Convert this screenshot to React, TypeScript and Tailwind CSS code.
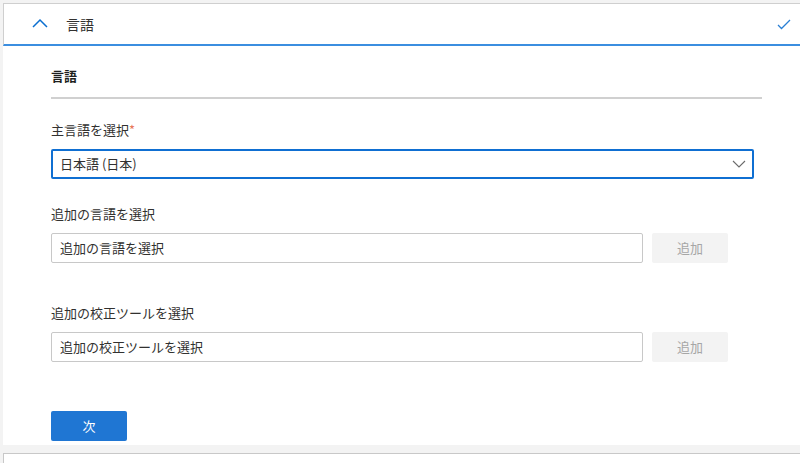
import React from 'react';

const font = { fontFamily: '"Noto Sans CJK JP", "Noto Sans", sans-serif' };

const ChevronUp = () => (
  <svg width="16" height="10" viewBox="0 0 16 10" fill="none">
    <path d="M1 9L8 2L15 9" stroke="#0b6fd0" strokeWidth="1.5" />
  </svg>
);

const Check = () => (
  <svg width="14" height="11" viewBox="0 0 14 11" fill="none">
    <path d="M1 6L4.5 9.5L13 1" stroke="#2a7fd4" strokeWidth="1.3" />
  </svg>
);

const ChevronDown = () => (
  <svg width="14" height="8" viewBox="0 0 14 8" fill="none">
    <path d="M1 1L7 7L13 1" stroke="#6b6b6b" strokeWidth="1.1" />
  </svg>
);

interface AddRowProps {
  label: string;
  placeholder: string;
}

const AddRow: React.FC<AddRowProps> = ({ label, placeholder }) => (
  <>
    <div className="text-[13px] leading-[20px] text-[#323130]">{label}</div>
    <div className="mt-[9px] flex gap-[9px]">
      <div className="flex h-[30px] w-[592px] items-center rounded-[2px] border border-[#c8c8c8] px-[8px] text-[13px] text-[#323130]">
        {placeholder}
      </div>
      <button className="h-[30px] w-[76px] rounded-[2px] bg-[#f3f3f3] text-[13px] text-[#a6a6a6]">
        追加
      </button>
    </div>
  </>
);

export default function App() {
  return (
    <div className="h-[463px] w-[800px] overflow-hidden bg-[#f3f3f3] pl-[3px] pt-[3px]" style={font}>
      {/* header */}
      <div className="flex h-[43px] w-[800px] items-center border-l border-t border-b-2 border-l-[#cfcfcf] border-t-[#cfcfcf] border-b-[#3b8ee0] bg-white">
        <div className="ml-[28px] flex w-[16px] items-center pb-[2px]">
          <ChevronUp />
        </div>
        <span className="ml-[18px] text-[14px] text-[#323130]">言語</span>
        <div className="ml-auto mr-[12px] flex items-center">
          <Check />
        </div>
      </div>

      {/* body */}
      <div className="w-[800px] bg-white pb-[4px] pl-[48px] pt-[20px]">
        <div className="text-[13px] font-bold leading-[20px] text-[#201f1e]">言語</div>
        <div className="mt-[11px] h-[2px] w-[711px] bg-[#d0d0d0]" />

        <div className="mt-[21px] text-[13px] leading-[20px] text-[#323130]">
          主言語を選択<span className="text-[#e8775a]">*</span>
        </div>
        <div className="mt-[9px] flex h-[30px] w-[703px] items-center justify-between rounded-[2px] border-2 border-[#0f6fd2] pl-[7px] pr-[6px] text-[13px] text-[#323130]">
          <span>日本語 (日本)</span>
          <ChevronDown />
        </div>

        <div className="mt-[25px]">
          <AddRow label="追加の言語を選択" placeholder="追加の言語を選択" />
        </div>

        <div className="mt-[40px]">
          <AddRow label="追加の校正ツールを選択" placeholder="追加の校正ツールを選択" />
        </div>

        <button className="mt-[49px] h-[30px] w-[76px] rounded-[2px] bg-[#1f76d3] text-[13px] text-white">
          次
        </button>
      </div>

      {/* next card */}
      <div className="mt-[8px] h-[40px] w-[800px] border-l border-t border-[#c8c8c8] bg-white" />
    </div>
  );
}
